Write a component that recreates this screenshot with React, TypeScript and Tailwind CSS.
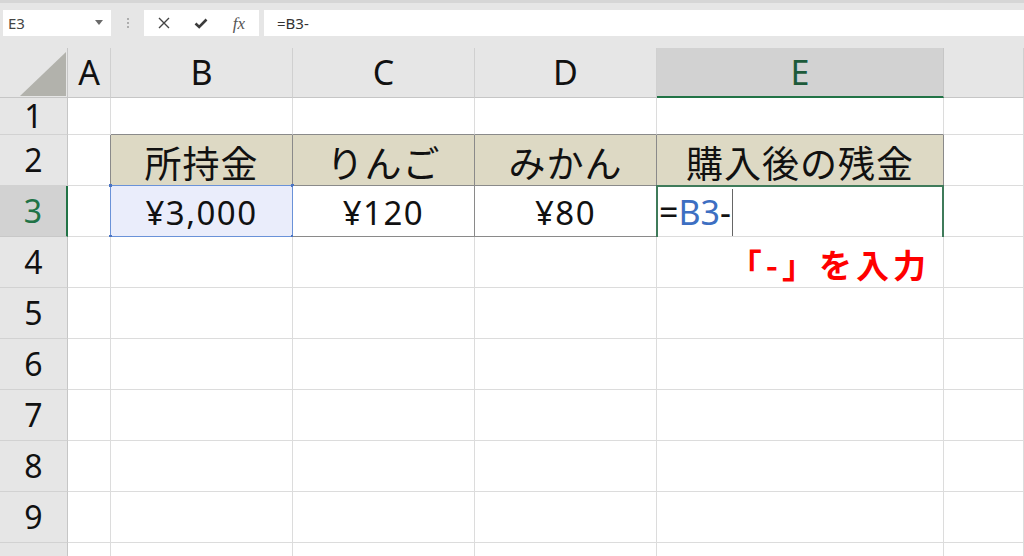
import React from 'react'

const latin = "font-['Noto_Sans','Noto_Sans_CJK_JP',sans-serif]"
const cjk = "font-['Noto_Sans_CJK_JP','Noto_Sans',sans-serif]"

const colWidths = 'grid-cols-[68px_43px_182px_182px_182px_287px_1fr]'
const cols = ['A', 'B', 'C', 'D', 'E', '']

function FormulaBar() {
  return (
    <div className="h-[48px] shrink-0">
      <div className="h-[3px] bg-[#d6d6d6]" />
      <div className="flex items-center h-[26px] mt-[7px]">
        {/* name box */}
        <div className="relative ml-[3px] w-[108px] h-full bg-white flex items-center pl-[5px] text-[15px] text-[#444]">
          E3
          <svg className="absolute right-[8px] top-[10px]" width="8" height="5" viewBox="0 0 8 5">
            <path d="M0 0 L8 0 L4 5 Z" fill="#6a6a6a" />
          </svg>
        </div>
        {/* grip dots */}
        <div className="w-[33px] flex flex-col items-center gap-[2px]">
          <span className="w-[2px] h-[2px] bg-[#9a9a9a] rounded-full" />
          <span className="w-[2px] h-[2px] bg-[#9a9a9a] rounded-full" />
          <span className="w-[2px] h-[2px] bg-[#9a9a9a] rounded-full" />
        </div>
        {/* cancel / enter / fx */}
        <div className="w-[115px] h-full bg-white flex items-center">
          <div className="w-[38px] flex justify-center pl-[2px]">
            <svg width="12" height="12" viewBox="0 0 12 12">
              <path d="M1 1 L11 11 M11 1 L1 11" stroke="#444" strokeWidth="1.4" fill="none" />
            </svg>
          </div>
          <div className="w-[38px] flex justify-center">
            <svg width="14" height="11" viewBox="0 0 14 11">
              <path d="M1.5 5.5 L5.2 9 L12.5 1.5" stroke="#3c3c3c" strokeWidth="2.6" fill="none" />
            </svg>
          </div>
          <div className="w-[38px] flex justify-center">
            <span className="font-['Liberation_Serif',serif] italic text-[17px] text-[#555] leading-none">fx</span>
          </div>
        </div>
        <div className="ml-[5px] flex-1 h-full bg-white flex items-center pl-[13px] text-[15px] text-[#333]">
          =B3-
        </div>
      </div>
    </div>
  )
}

function ColumnHeader() {
  return (
    <>
      <div className="relative h-[50px] border-r border-b border-[#c6c6c6] bg-[#e6e6e6]">
        <svg className="absolute left-[20px] top-[4px]" width="47" height="44" viewBox="0 0 47 44">
          <path d="M0 44 L46 44 L46 0 Z" fill="#b2b2ac" />
        </svg>
      </div>
      {cols.map((c) =>
        c === 'E' ? (
          <div
            key="E"
            className="h-[50px] bg-[#d2d2d2] border-r border-[#c6c6c6] border-b-2 border-b-[#217346] flex items-center justify-center text-[34px] text-[#1d5a3a]"
          >
            E
          </div>
        ) : (
          <div
            key={c || 'F'}
            className="h-[50px] bg-[#e6e6e6] border-r border-[#d0d0d0] border-b border-b-[#c6c6c6] flex items-center justify-center text-[34px] text-[#111]"
          >
            {c}
          </div>
        )
      )}
    </>
  )
}

function RowHead({ n, h, label = true }: { n: number; h: string; label?: boolean }) {
  const active = n === 3
  return (
    <div
      className={
        active
          ? `${h} bg-[#d2d2d2] border-r-2 border-r-[#217346] border-b border-b-[#c8c8c8] flex items-center justify-center text-[32px] text-[#217346]`
          : `${h} bg-[#e6e6e6] border-r border-r-[#c6c6c6] border-b border-b-[#d2d2d2] flex items-center justify-center text-[32px] text-[#111]`
      }
    >
      {label ? n : null}
    </div>
  )
}

function Cell({ className, children }: { className?: string; children?: React.ReactNode }) {
  return <div className={`relative bg-white border-r border-b ${className ?? ''}`}>{children}</div>
}

const grid = 'border-[#dcdcdc]'
const dark = 'border-[#8a8a8a]'

export default function App() {
  const headers = ['所持金', 'りんご', 'みかん', '購入後の残金']
  const values = ['¥3,000', '¥120', '¥80']
  return (
    <div className={`w-[1024px] h-[556px] overflow-hidden bg-[#e6e6e6] flex flex-col ${latin}`}>
      <FormulaBar />
      <div className={`grid ${colWidths}`}>
        <ColumnHeader />

        {/* row 1 */}
        <div className="h-[37px] bg-[#e6e6e6] border-r border-r-[#c6c6c6] border-b border-b-[#d2d2d2] flex justify-center pt-[1px] text-[32px] leading-[34px] text-[#111]">
          1
        </div>
        <Cell className={`h-[37px] ${grid}`} />
        {headers.map((_, i) => (
          <Cell key={i} className={`h-[37px] border-r-[#dcdcdc] border-b-[#8a8a8a]`} />
        ))}
        <Cell className={`h-[37px] ${grid}`} />

        {/* row 2 */}
        <RowHead n={2} h="h-[51px]" />
        <Cell className={`h-[51px] border-r-[#8a8a8a] border-b-[#dcdcdc]`} />
        {headers.map((t) => (
          <div
            key={t}
            className={`h-[51px] bg-[#ddd9c4] border-r border-b ${dark} flex items-center justify-center pt-[5px] text-[37px] tracking-[1px] text-[#111] ${cjk}`}
          >
            {t}
          </div>
        ))}
        <Cell className={`h-[51px] ${grid}`} />

        {/* row 3 */}
        <RowHead n={3} h="h-[51px]" />
        <Cell className={`h-[51px] border-r-[#8a8a8a] border-b-[#dcdcdc]`} />
        {values.map((v, i) => (
          <div
            key={v}
            className={`relative h-[51px] border-r border-b ${dark} flex items-center justify-center pt-[3px] text-[33px] tracking-[1.5px] text-[#111] ${
              i === 0 ? 'bg-[#eaedfb]' : 'bg-white'
            }`}
          >
            {v}
            {i === 0 && (
              <>
                <div className="absolute -left-px -top-px -right-px -bottom-px border border-[#6a92d8]" />
                <div className="absolute -left-[2px] -top-[2px] w-[3px] h-[3px] bg-[#4a74c4]" />
                <div className="absolute -right-[2px] -top-[2px] w-[3px] h-[3px] bg-[#4a74c4]" />
                <div className="absolute -left-[2px] -bottom-[2px] w-[3px] h-[3px] bg-[#4a74c4]" />
                <div className="absolute -right-[2px] -bottom-[2px] w-[3px] h-[3px] bg-[#4a74c4]" />
              </>
            )}
          </div>
        ))}
        <div className={`relative h-[51px] bg-white border-r border-b ${grid} flex items-center pl-[2px] pt-[2px] text-[34px] text-[#111]`}>
          <span>=</span>
          <span className="text-[#3d6fc2]">B3</span>
          <span>-</span>
          <span className="ml-[1px] w-px h-[47px] bg-[#666]" />
          <div className="absolute -left-px -top-px -right-px -bottom-px border-l-2 border-t-2 border-r-2 border-[#3f7b5a]" />
          <div className="absolute -right-[3px] -bottom-[3px] w-[4px] h-[4px] bg-[#3f7b5a]" />
        </div>
        <Cell className={`h-[51px] ${grid}`} />

        {/* rows 4-10 */}
        {[4, 5, 6, 7, 8, 9, 10].map((n) => (
          <React.Fragment key={n}>
            <RowHead n={n} h="h-[51px]" label={n < 10} />
            {cols.map((c) =>
              n === 4 && c === 'E' ? (
                <Cell key={c} className={`h-[51px] ${grid}`}>
                  <div
                    className={`h-full flex items-center justify-end pr-[13px] pt-[6px] text-[33px] font-bold tracking-[4px] text-[#ff0000] ${cjk}`}
                  >
                    「-」を入力
                  </div>
                </Cell>
              ) : (
                <Cell key={c || 'F'} className={`h-[51px] ${grid}`} />
              )
            )}
          </React.Fragment>
        ))}
      </div>
    </div>
  )
}
